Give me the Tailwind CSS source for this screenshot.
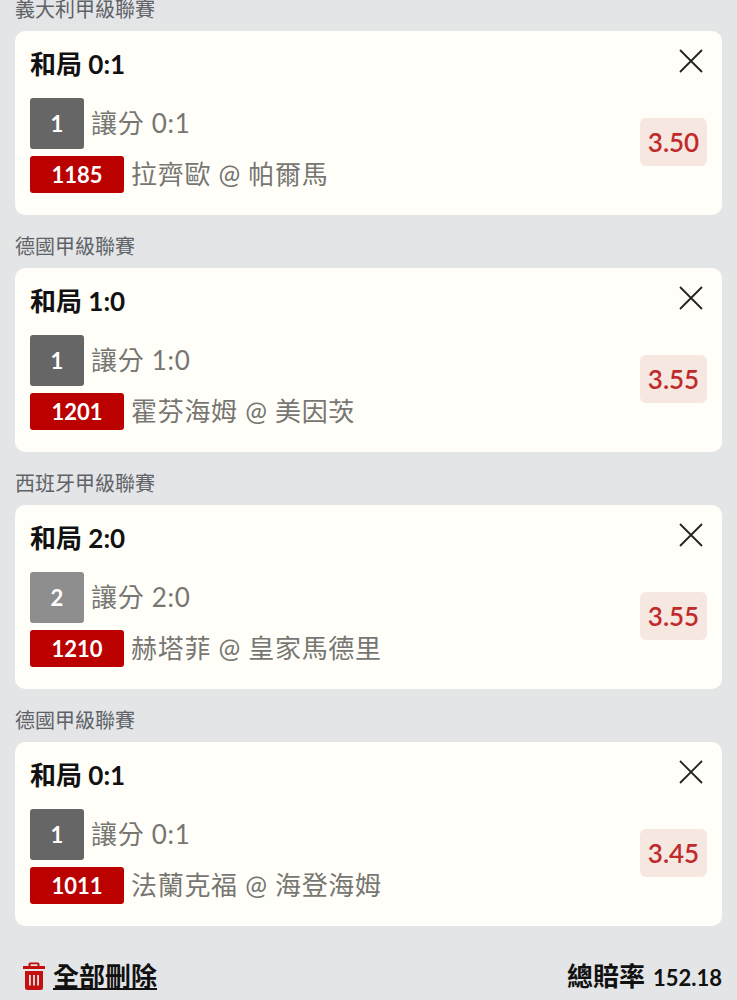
<!DOCTYPE html>
<html><head><meta charset="utf-8"><script src="https://cdn.jsdelivr.net/npm/@tailwindcss/browser@4"></script></head>
<body class="bg-[#e3e5e7] font-['Lato','Noto_Sans_CJK_TC',sans-serif] overflow-hidden">
<div class="w-[737px] h-[1000px] overflow-hidden px-[15px]">
<div class="mt-[-22px]">

<section>
<h2 class="h-[53px] pt-[18px] text-[20px] leading-[26px] text-[#5f6368]">義大利甲級聯賽</h2>
<article class="h-[184px] bg-[#fffef8] rounded-[10px] px-[15px] flex justify-between">
<div class="pt-[15px]">
<div class="text-[26px] leading-[36px] font-bold text-[#111] h-[52px]">和局 0:1</div>
<div class="flex items-center h-[51px] gap-[7px]"><span class="w-[54px] h-[51px] rounded-[3px] bg-[#666666] text-white font-bold text-[22px] flex items-center justify-center">1</span><span class="text-[26px] text-[#777672] tracking-[0.7px]">讓分 0:1</span></div>
<div class="flex items-center h-[37px] mt-[7px] gap-[7px]"><span class="w-[94px] h-[37px] rounded-[3px] bg-[#bb0000] text-white font-bold text-[22px] flex items-center justify-center">1185</span><span class="text-[26px] text-[#777672] tracking-[0.7px]">拉齊歐 @ 帕爾馬</span></div>
</div>
<div class="flex flex-col items-end">
<svg class="mt-[18px] mr-[4px]" width="24" height="24" viewBox="0 0 24 24" fill="none" stroke="#222" stroke-width="1.8"><path d="M1 1L23 23M23 1L1 23"/></svg>
<span class="mt-[45px] w-[67px] h-[48px] rounded-[6px] bg-[#f7e7e1] text-[#bf2a2a] text-[26px] font-semibold flex items-center justify-center">3.50</span>
</div>
</article>
</section>

<section>
<h2 class="h-[53px] pt-[18px] text-[20px] leading-[26px] text-[#5f6368]">德國甲級聯賽</h2>
<article class="h-[184px] bg-[#fffef8] rounded-[10px] px-[15px] flex justify-between">
<div class="pt-[15px]">
<div class="text-[26px] leading-[36px] font-bold text-[#111] h-[52px]">和局 1:0</div>
<div class="flex items-center h-[51px] gap-[7px]"><span class="w-[54px] h-[51px] rounded-[3px] bg-[#666666] text-white font-bold text-[22px] flex items-center justify-center">1</span><span class="text-[26px] text-[#777672] tracking-[0.7px]">讓分 1:0</span></div>
<div class="flex items-center h-[37px] mt-[7px] gap-[7px]"><span class="w-[94px] h-[37px] rounded-[3px] bg-[#bb0000] text-white font-bold text-[22px] flex items-center justify-center">1201</span><span class="text-[26px] text-[#777672] tracking-[0.7px]">霍芬海姆 @ 美因茨</span></div>
</div>
<div class="flex flex-col items-end">
<svg class="mt-[18px] mr-[4px]" width="24" height="24" viewBox="0 0 24 24" fill="none" stroke="#222" stroke-width="1.8"><path d="M1 1L23 23M23 1L1 23"/></svg>
<span class="mt-[45px] w-[67px] h-[48px] rounded-[6px] bg-[#f7e7e1] text-[#bf2a2a] text-[26px] font-semibold flex items-center justify-center">3.55</span>
</div>
</article>
</section>

<section>
<h2 class="h-[53px] pt-[18px] text-[20px] leading-[26px] text-[#5f6368]">西班牙甲級聯賽</h2>
<article class="h-[184px] bg-[#fffef8] rounded-[10px] px-[15px] flex justify-between">
<div class="pt-[15px]">
<div class="text-[26px] leading-[36px] font-bold text-[#111] h-[52px]">和局 2:0</div>
<div class="flex items-center h-[51px] gap-[7px]"><span class="w-[54px] h-[51px] rounded-[3px] bg-[#8e8e8e] text-white font-bold text-[22px] flex items-center justify-center">2</span><span class="text-[26px] text-[#777672] tracking-[0.7px]">讓分 2:0</span></div>
<div class="flex items-center h-[37px] mt-[7px] gap-[7px]"><span class="w-[94px] h-[37px] rounded-[3px] bg-[#bb0000] text-white font-bold text-[22px] flex items-center justify-center">1210</span><span class="text-[26px] text-[#777672] tracking-[0.7px]">赫塔菲 @ 皇家馬德里</span></div>
</div>
<div class="flex flex-col items-end">
<svg class="mt-[18px] mr-[4px]" width="24" height="24" viewBox="0 0 24 24" fill="none" stroke="#222" stroke-width="1.8"><path d="M1 1L23 23M23 1L1 23"/></svg>
<span class="mt-[45px] w-[67px] h-[48px] rounded-[6px] bg-[#f7e7e1] text-[#bf2a2a] text-[26px] font-semibold flex items-center justify-center">3.55</span>
</div>
</article>
</section>

<section>
<h2 class="h-[53px] pt-[18px] text-[20px] leading-[26px] text-[#5f6368]">德國甲級聯賽</h2>
<article class="h-[184px] bg-[#fffef8] rounded-[10px] px-[15px] flex justify-between">
<div class="pt-[15px]">
<div class="text-[26px] leading-[36px] font-bold text-[#111] h-[52px]">和局 0:1</div>
<div class="flex items-center h-[51px] gap-[7px]"><span class="w-[54px] h-[51px] rounded-[3px] bg-[#666666] text-white font-bold text-[22px] flex items-center justify-center">1</span><span class="text-[26px] text-[#777672] tracking-[0.7px]">讓分 0:1</span></div>
<div class="flex items-center h-[37px] mt-[7px] gap-[7px]"><span class="w-[94px] h-[37px] rounded-[3px] bg-[#bb0000] text-white font-bold text-[22px] flex items-center justify-center">1011</span><span class="text-[26px] text-[#777672] tracking-[0.7px]">法蘭克福 @ 海登海姆</span></div>
</div>
<div class="flex flex-col items-end">
<svg class="mt-[18px] mr-[4px]" width="24" height="24" viewBox="0 0 24 24" fill="none" stroke="#222" stroke-width="1.8"><path d="M1 1L23 23M23 1L1 23"/></svg>
<span class="mt-[45px] w-[67px] h-[48px] rounded-[6px] bg-[#f7e7e1] text-[#bf2a2a] text-[26px] font-semibold flex items-center justify-center">3.45</span>
</div>
</article>
</section>

<footer class="flex justify-between items-center mt-[31px] h-[38px]">
<div class="flex items-center gap-[7px] pl-[7px]">
<svg width="24" height="30" viewBox="0 0 24 30" fill="#c40f0f"><path d="M8 1.5h8a1.5 1.5 0 0 1 1.5 1.5v2H23v3H1V5h5.500V3A1.500 1.500 0 0 1 8 1.500zM8.500 3.300V5h7V3.300z"/><path fill-rule="evenodd" d="M3 10h18v16.500a2.500 2.500 0 0 1-2.500 2.500h-13A2.500 2.500 0 0 1 3 26.500zM7 14v10.500h1.800V14zM11.100 14v10.500h1.800V14zM15.200 14v10.500h1.800V14z"/></svg>
<span class="text-[26px] font-bold text-[#111] underline underline-offset-[2px]">全部刪除</span>
</div>
<div class="flex items-baseline gap-[8px] text-[#111] font-bold"><span class="text-[26px]">總賠率</span><span class="text-[22px]">152.18</span></div>
</footer>

</div>
</div>
</body></html>
